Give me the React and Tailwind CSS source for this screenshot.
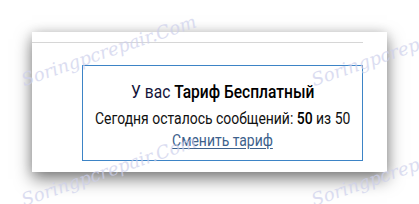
const marks = [
  'left-[26px] top-[68px]',
  'left-[316px] top-[68px]',
  'left-[26px] top-[188px]',
  'left-[316px] top-[188px]',
];

export default function App() {
  return (
    <div className="w-[419px] h-[204px] bg-white overflow-hidden relative" style={{ fontFamily: 'Roboto, "Liberation Sans", sans-serif' }}>
      <div className="ml-[32px] mt-[32px] w-[355px] h-[140px] bg-white shadow-[0_7px_16px_rgba(0,0,0,0.5),0_0_10px_rgba(0,0,0,0.12)]">
        <div className="pt-[10px] pr-[24px]">
          <div className="border-t border-[#d6d6d6]" />
          <div className="ml-[50px] mt-[22px] h-[96px] border border-[#3d84c6] flex flex-col items-center pt-[14px]">
            <div className="text-[19px] leading-[24px] text-[#14143a] scale-x-[0.82] whitespace-nowrap">
              У вас <span className="font-medium text-black">Тариф Бесплатный</span>
            </div>
            <div className="text-[17px] leading-[22px] text-[#111] mt-[3px] scale-x-[0.82] whitespace-nowrap">
              Сегодня осталось сообщений: <span className="font-medium text-black">50</span> из 50
            </div>
            <a href="#" className="text-[17px] leading-[22px] text-[#3d618c] underline underline-offset-2 scale-x-[0.82] whitespace-nowrap">Сменить тариф</a>
          </div>
        </div>
      </div>
      {marks.map((cls, i) => (
        <span
          key={i}
          className={`absolute ${cls} h-[24px] leading-[24px] -rotate-[19deg] origin-bottom-left text-[18px] italic text-[#cdd0ec] opacity-70 whitespace-nowrap pointer-events-none`}
          style={{ fontFamily: '"DejaVu Serif", serif' }}
        >
          Soringpcrepair.Com
        </span>
      ))}
    </div>
  );
}
